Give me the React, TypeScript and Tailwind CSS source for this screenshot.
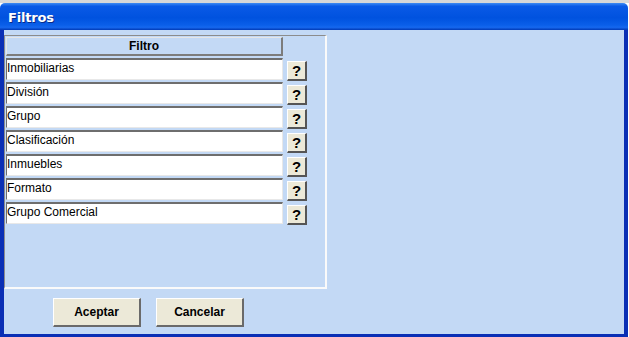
const FILTERS = [
  "Inmobiliarias",
  "División",
  "Grupo",
  "Clasificación",
  "Inmuebles",
  "Formato",
  "Grupo Comercial",
];

function HelpButton() {
  return (
    <button className="w-[20px] h-[20px] mt-[3px] shrink-0 flex items-center justify-center bg-[#ece9d8] border-t border-l border-[#ffffff] border-b-2 border-r-2 border-b-[#555555] border-r-[#555555] text-[15px] font-bold leading-none text-black">
      ?
    </button>
  );
}

export default function App() {
  return (
    <div className="w-[629px] h-[337px] overflow-hidden bg-white font-['Liberation_Sans',Arial,sans-serif]">
      {/* strip of whatever is behind the window */}
      <div className="h-[3px] bg-[#d8d8d8]" />

      <div className="w-[628px] h-[334px] flex flex-col">
        {/* ── Title bar ───────────────────── */}
        <div className="h-[27px] shrink-0 rounded-t-[5px] bg-[linear-gradient(to_bottom,#3f8cf3_0%,#0a5ae6_12%,#0052df_55%,#0a5fe9_82%,#1668ef_90%,#0039b5_100%)] flex items-center pl-[8px] pt-[2px]">
          <span className="text-white text-[13px] font-bold font-['DejaVu_Sans',sans-serif] tracking-[-0.2px] [text-shadow:1px_1px_0_#0a2c8a]">
            Filtros
          </span>
        </div>

        {/* ── Body ─────────────────────────── */}
        <div className="flex-1 bg-[#c3d9f5] border-l-4 border-r-4 border-b-[3px] border-[#0a2fb5] flex flex-col">
          {/* Table panel */}
          <div className="mt-[5px] w-[323px] h-[254px] border-t border-l border-[#8c8c8c] border-b-2 border-r-2 border-b-[#fafafa] border-r-[#fafafa] p-[1px] flex flex-col gap-[2px]">
            <div className="w-[277px] h-[19px] bg-[#c3d9f5] border-t border-l border-[#e6e6e6] border-b-2 border-r-2 border-b-[#7c7c7c] border-r-[#7c7c7c] flex items-center justify-center text-[12px] font-bold text-black">
              Filtro
            </div>
            {FILTERS.map((f) => (
              <div key={f} className="flex gap-[4px] h-[22px]">
                <div className="w-[277px] h-[22px] bg-white border-t-2 border-l border-[#6e6e6e] border-b border-r border-b-[#e8e8e8] border-r-[#e8e8e8] pt-[1px] text-[12px] leading-[14px] text-black">
                  {f}
                </div>
                <HelpButton />
              </div>
            ))}
          </div>

          {/* Buttons */}
          <div className="mt-[9px] ml-[49px] flex gap-[15px]">
            <button className="w-[88px] h-[29px] bg-[#ece9d8] border-t border-l border-white border-b-2 border-r-2 border-b-[#6a6a6a] border-r-[#6a6a6a] text-[12px] font-bold text-black">
              Aceptar
            </button>
            <button className="w-[88px] h-[29px] bg-[#ece9d8] border-t border-l border-white border-b-2 border-r-2 border-b-[#6a6a6a] border-r-[#6a6a6a] text-[12px] font-bold text-black">
              Cancelar
            </button>
          </div>
        </div>
      </div>
    </div>
  );
}
